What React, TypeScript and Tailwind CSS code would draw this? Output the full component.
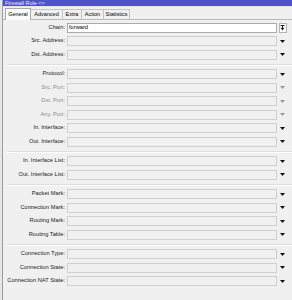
import React from 'react';

type Row = { label: string; disabled?: boolean; value?: string; chain?: boolean };

const groups: Row[][] = [
  [
    { label: 'Chain:', value: 'forward', chain: true },
    { label: 'Src. Address:' },
    { label: 'Dst. Address:' },
  ],
  [
    { label: 'Protocol:' },
    { label: 'Src. Port:', disabled: true },
    { label: 'Dst. Port:', disabled: true },
    { label: 'Any. Port:', disabled: true },
    { label: 'In. Interface:' },
    { label: 'Out. Interface:' },
  ],
  [{ label: 'In. Interface List:' }, { label: 'Out. Interface List:' }],
  [
    { label: 'Packet Mark:' },
    { label: 'Connection Mark:' },
    { label: 'Routing Mark:' },
    { label: 'Routing Table:' },
  ],
  [
    { label: 'Connection Type:' },
    { label: 'Connection State:' },
    { label: 'Connection NAT State:' },
  ],
];

const tabs = ['General', 'Advanced', 'Extra', 'Action', 'Statistics'];

function DownArrow({ muted }: { muted?: boolean }) {
  return (
    <svg width="5" height="3" viewBox="0 0 5 3" className="block">
      <path d="M0 0H5L2.5 3Z" fill={muted ? '#9a9a9a' : '#111'} />
    </svg>
  );
}

function ChainButton() {
  return (
    <div className="w-[8px] h-[10px] bg-white border border-[#b4b4b4] flex items-center justify-center">
      <svg width="5" height="6" viewBox="0 0 5 6" className="block">
        <path d="M0.5 0.5H4.5" stroke="#222" strokeWidth="1" />
        <path d="M2.5 1V3" stroke="#222" strokeWidth="1" />
        <path d="M0.5 2.8H4.5L2.5 5.5Z" fill="#222" />
      </svg>
    </div>
  );
}

function FieldRow({ row }: { row: Row }) {
  return (
    <div className="h-[13.5px] flex items-center">
      <div
        className={`w-[63px] text-right pr-[1px] whitespace-nowrap leading-none ${
          row.disabled ? 'text-[#8c8c8c]' : 'text-[#1a1a1a]'
        }`}
      >
        {row.label}
      </div>
      <div
        className={`ml-[1px] w-[210px] h-[10px] border flex items-center pl-[1px] leading-none ${
          row.chain ? 'bg-white border-[#a9a9a9]' : 'bg-[#f0f0f0] border-[#cfcfcf]'
        }`}
      >
        {row.value}
      </div>
      <div className="w-[11px] flex items-center justify-center">
        {row.chain ? <ChainButton /> : <DownArrow muted={row.disabled} />}
      </div>
    </div>
  );
}

function Separator() {
  return (
    <div className="h-[6px] flex items-center pl-[4px]">
      <div className="flex-1 border-t border-[#dedede] border-b-white border-b" />
    </div>
  );
}

export default function App() {
  return (
    <div
      className="w-[292px] h-[300px] bg-[#f0f0f0] flex overflow-hidden text-[5.7px]"
      style={{ fontFamily: '"Liberation Sans", Arial, sans-serif' }}
    >
      <div className="w-[3px] h-full bg-[#e6e6e6] border-r border-[#9c9c9c]" />
      <div className="flex-1 flex flex-col">
        <div className="h-[6px] bg-[#4d52c6] flex items-end pl-[2px] overflow-hidden">
          <span className="text-[#e8e8ff] text-[5.5px] leading-none mb-[0px]">Firewall Rule &lt;&gt;</span>
        </div>
        <div className="h-[1px] bg-[#e4e4f0]" />
        <div className="h-[13px] flex items-end pl-[2px] border-b border-[#b9b9b9]">
          {tabs.map((t, i) => (
            <div
              key={t}
              className={`border border-b-0 leading-none flex items-center justify-center text-[5.5px] ${
                i === 0
                  ? 'h-[12px] bg-[#fbfbfb] border-[#a8a8a8] w-[26px] relative top-[1px]'
                  : 'h-[10px] bg-[#f0f0f0] border-[#c4c4c4] -ml-[1px]'
              } ${i === 1 ? 'w-[33px]' : ''} ${i === 2 ? 'w-[20px]' : ''} ${i === 3 ? 'w-[23px]' : ''} ${
                i === 4 ? 'w-[27px]' : ''
              }`}
            >
              {t}
            </div>
          ))}
        </div>
        <div className="pt-[1px] flex flex-col">
          {groups.map((g, gi) => (
            <div key={gi} className="flex flex-col">
              {gi > 0 && <Separator />}
              {g.map((r) => (
                <FieldRow key={r.label} row={r} />
              ))}
            </div>
          ))}
        </div>
      </div>
    </div>
  );
}
